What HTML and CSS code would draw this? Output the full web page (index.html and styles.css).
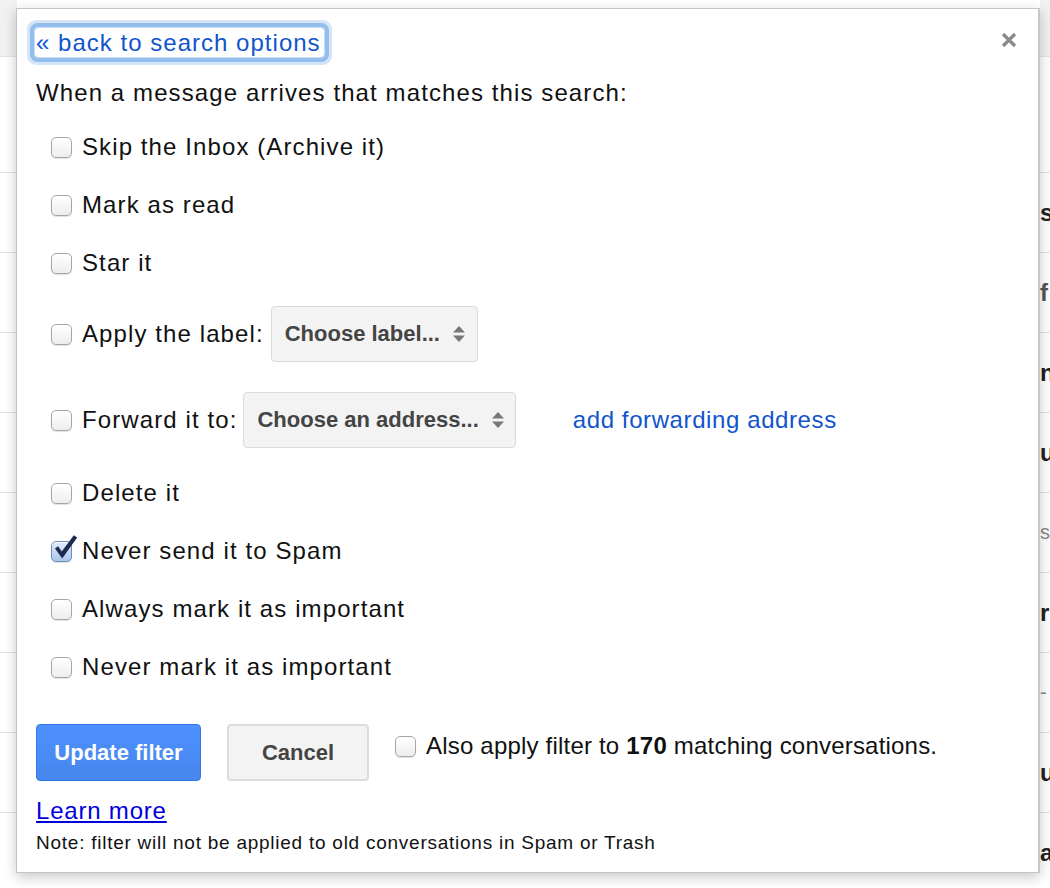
FILE: index.html
```html
<!DOCTYPE html>
<html>
<head>
<meta charset="utf-8">
<link rel="stylesheet" href="styles.css">
</head>
<body>
<div class="page">
  <div class="toolbar"><div class="search"></div></div>
  <div class="tabs"></div>
  <div class="list">
    <div class="row"><span class="peek">s</span></div>
    <div class="row"><span class="peek dim">f</span></div>
    <div class="row"><span class="peek">na</span></div>
    <div class="row"><span class="peek">u</span></div>
    <div class="row"><span class="peek light">s</span></div>
    <div class="row"><span class="peek">r</span></div>
    <div class="row"><span class="peek light">-</span></div>
    <div class="row"><span class="peek">u</span></div>
    <div class="row"><span class="peek">a</span></div>
  </div>

  <div class="dialog">
    <svg class="close" width="16" height="16" viewBox="0 0 16 16"><path d="M2 2 L14 14 M14 2 L2 14" stroke="#8a8a8a" stroke-width="3.2" stroke-linecap="butt"/></svg>
    <div class="backrow"><a class="back" href="#">« back to search options</a></div>
    <div class="intro">When a message arrives that matches this search:</div>
    <div class="options">
      <div class="opt"><span class="cb"></span><span class="lbl">Skip the Inbox (Archive it)</span></div>
      <div class="opt"><span class="cb"></span><span class="lbl">Mark as read</span></div>
      <div class="opt"><span class="cb"></span><span class="lbl">Star it</span></div>
      <div class="opt opt-apply"><span class="cb"></span><span class="lbl">Apply the label:</span>
        <span class="select sel-label">Choose label...<svg class="arrows" width="14" height="18" viewBox="0 0 14 18"><path d="M7 1 L13 7.5 L1 7.5 Z M1 10.5 L13 10.5 L7 17 Z" fill="#777"/></svg></span>
      </div>
      <div class="opt opt-fwd"><span class="cb"></span><span class="lbl">Forward it to:</span>
        <span class="select sel-addr">Choose an address...<svg class="arrows" width="14" height="18" viewBox="0 0 14 18"><path d="M7 1 L13 7.5 L1 7.5 Z M1 10.5 L13 10.5 L7 17 Z" fill="#777"/></svg></span>
        <a class="addfwd" href="#">add forwarding address</a>
      </div>
      <div class="opt"><span class="cb"></span><span class="lbl">Delete it</span></div>
      <div class="opt"><span class="cb checked"><svg class="tick" width="28" height="28" viewBox="0 0 28 28"><path d="M4 14.5 L7 12.2 L10.8 17.5 L22.8 1.2 L26.2 3.6 L11.2 24.5 Z" fill="#1c2a4e"/></svg></span><span class="lbl">Never send it to Spam</span></div>
      <div class="opt"><span class="cb"></span><span class="lbl">Always mark it as important</span></div>
      <div class="opt"><span class="cb"></span><span class="lbl">Never mark it as important</span></div>
    </div>
    <div class="actions">
      <button class="btn btn-primary">Update filter</button>
      <button class="btn btn-default">Cancel</button>
      <div class="also"><span class="cb"></span><span class="lbl also-lbl">Also apply filter to <b>170</b> matching conversations.</span></div>
    </div>
    <a class="learn" href="#">Learn more</a>
    <div class="note">Note: filter will not be applied to old conversations in Spam or Trash</div>
  </div>
</div>
</body>
</html>
```

FILE: styles.css
```css
html, body {
  margin: 0;
  padding: 0;
}
body {
  font-family: "Liberation Sans", Arial, sans-serif;
  color: #222;
  background: #fff;
}
.page {
  position: relative;
  width: 1050px;
  height: 888px;
  overflow: hidden;
  background: #fff;
}
.toolbar {
  height: 57px;
  background: #f1f1f1;
  border-bottom: 1px solid #e5e5e5;
  box-sizing: border-box;
  padding-left: 17px;
}
.search {
  width: 1023px;
  height: 8px;
  background: #fff;
}
.tabs {
  height: 116px;
  border-bottom: 1px solid #e3e3e3;
  box-sizing: border-box;
}
.list .row {
  height: 80px;
  border-bottom: 1px solid #e3e3e3;
  box-sizing: border-box;
  display: flex;
  align-items: center;
  padding-left: 1040px;
  white-space: nowrap;
}
.peek {
  font-weight: bold;
  font-size: 24px;
  color: #222;
}
.peek.dim { color: #555; }
.peek.light { color: #888; font-weight: normal; font-size: 20px; }

.dialog {
  position: absolute;
  left: 16px;
  top: 8px;
  width: 1024px;
  height: 865px;
  box-sizing: border-box;
  background: #fff;
  border: 1px solid #c4c4c4;
  border-right: 2px solid #c8c8c8;
  box-shadow: 0 4px 12px rgba(0,0,0,0.22);
  padding: 19px 0 0 19px;
}
.close {
  position: absolute;
  right: 21px;
  top: 23px;
}
.backrow {
  height: 29px;
}
.back {
  display: inline-block;
  margin-left: -1px;
  padding: 0 3px 0 1px;
  line-height: 29px;
  font-size: 24px;
  letter-spacing: 1.02px;
  color: #15c;
  text-decoration: none;
  border-radius: 3px;
  box-shadow: 0 0 0 1px #c9def5, 0 0 0 5px #93bdea, 0 0 0 8px #d5e5f7;
}
.intro {
  margin-top: 21px;
  font-size: 24px;
  line-height: 29px;
  letter-spacing: 1.1px;
  color: #111;
}
.options {
  margin-top: 11px;
}
.opt {
  height: 58px;
  display: flex;
  align-items: center;
  padding-left: 15px;
}
.opt.opt-apply { height: 84px; }
.opt.opt-fwd { height: 88px; }
.lbl {
  font-size: 24px;
  letter-spacing: 1.1px;
  color: #111;
  white-space: nowrap;
}
.also-lbl {
  letter-spacing: 0.2px;
}
.cb {
  position: relative;
  flex: none;
  width: 21px;
  height: 21px;
  box-sizing: border-box;
  border: 1px solid #a6a6a6;
  border-radius: 5px;
  background: linear-gradient(#ffffff, #ededed);
  box-shadow: 0 1px 1px rgba(0,0,0,0.12), inset 0 1px 0 #fff;
  margin-right: 10px;
}
.cb.checked {
  border-color: #6d8cb8;
  background: linear-gradient(#e1ecfa, #a9c6ec);
}
.tick {
  position: absolute;
  left: -1px;
  top: -8px;
}
.select {
  display: inline-flex;
  align-items: center;
  height: 56px;
  box-sizing: border-box;
  margin-left: 7px;
  padding: 0 11px 0 13px;
  gap: 12px;
  background: #f3f3f3;
  border: 1px solid #dadada;
  border-radius: 4px;
  font-weight: bold;
  font-size: 22px;
  color: #444;
  white-space: nowrap;
}
.sel-addr { margin-left: 6px; padding-right: 10px; }
.arrows { flex: none; }
.addfwd {
  margin-left: 57px;
  font-size: 24px;
  letter-spacing: 0.6px;
  color: #15c;
  text-decoration: none;
  white-space: nowrap;
}
.actions {
  margin-top: 28px;
  display: flex;
  align-items: flex-start;
  gap: 26px;
}
.btn {
  height: 57px;
  box-sizing: border-box;
  border-radius: 4px;
  font-family: "Liberation Sans", Arial, sans-serif;
  font-weight: bold;
  font-size: 22px;
  padding: 0;
  margin: 0;
}
.btn-primary {
  width: 165px;
  background: linear-gradient(#4d90fe, #4787ed);
  border: 1px solid #3079ed;
  color: #fff;
}
.btn-default {
  width: 142px;
  background: #f3f3f3;
  border: 2px solid #dcdcdc;
  color: #444;
}
.also {
  display: flex;
  align-items: center;
  height: 44px;
}
.also .cb { margin-top: 1px; }
.also b { font-weight: bold; }
.learn {
  display: block;
  width: max-content;
  margin-top: 15px;
  font-size: 24px;
  line-height: 29px;
  letter-spacing: 0.8px;
  color: #0000dd;
  text-decoration: underline;
}
.note {
  margin-top: 6px;
  font-size: 19px;
  line-height: 24px;
  letter-spacing: 0.75px;
  color: #111;
}
```
